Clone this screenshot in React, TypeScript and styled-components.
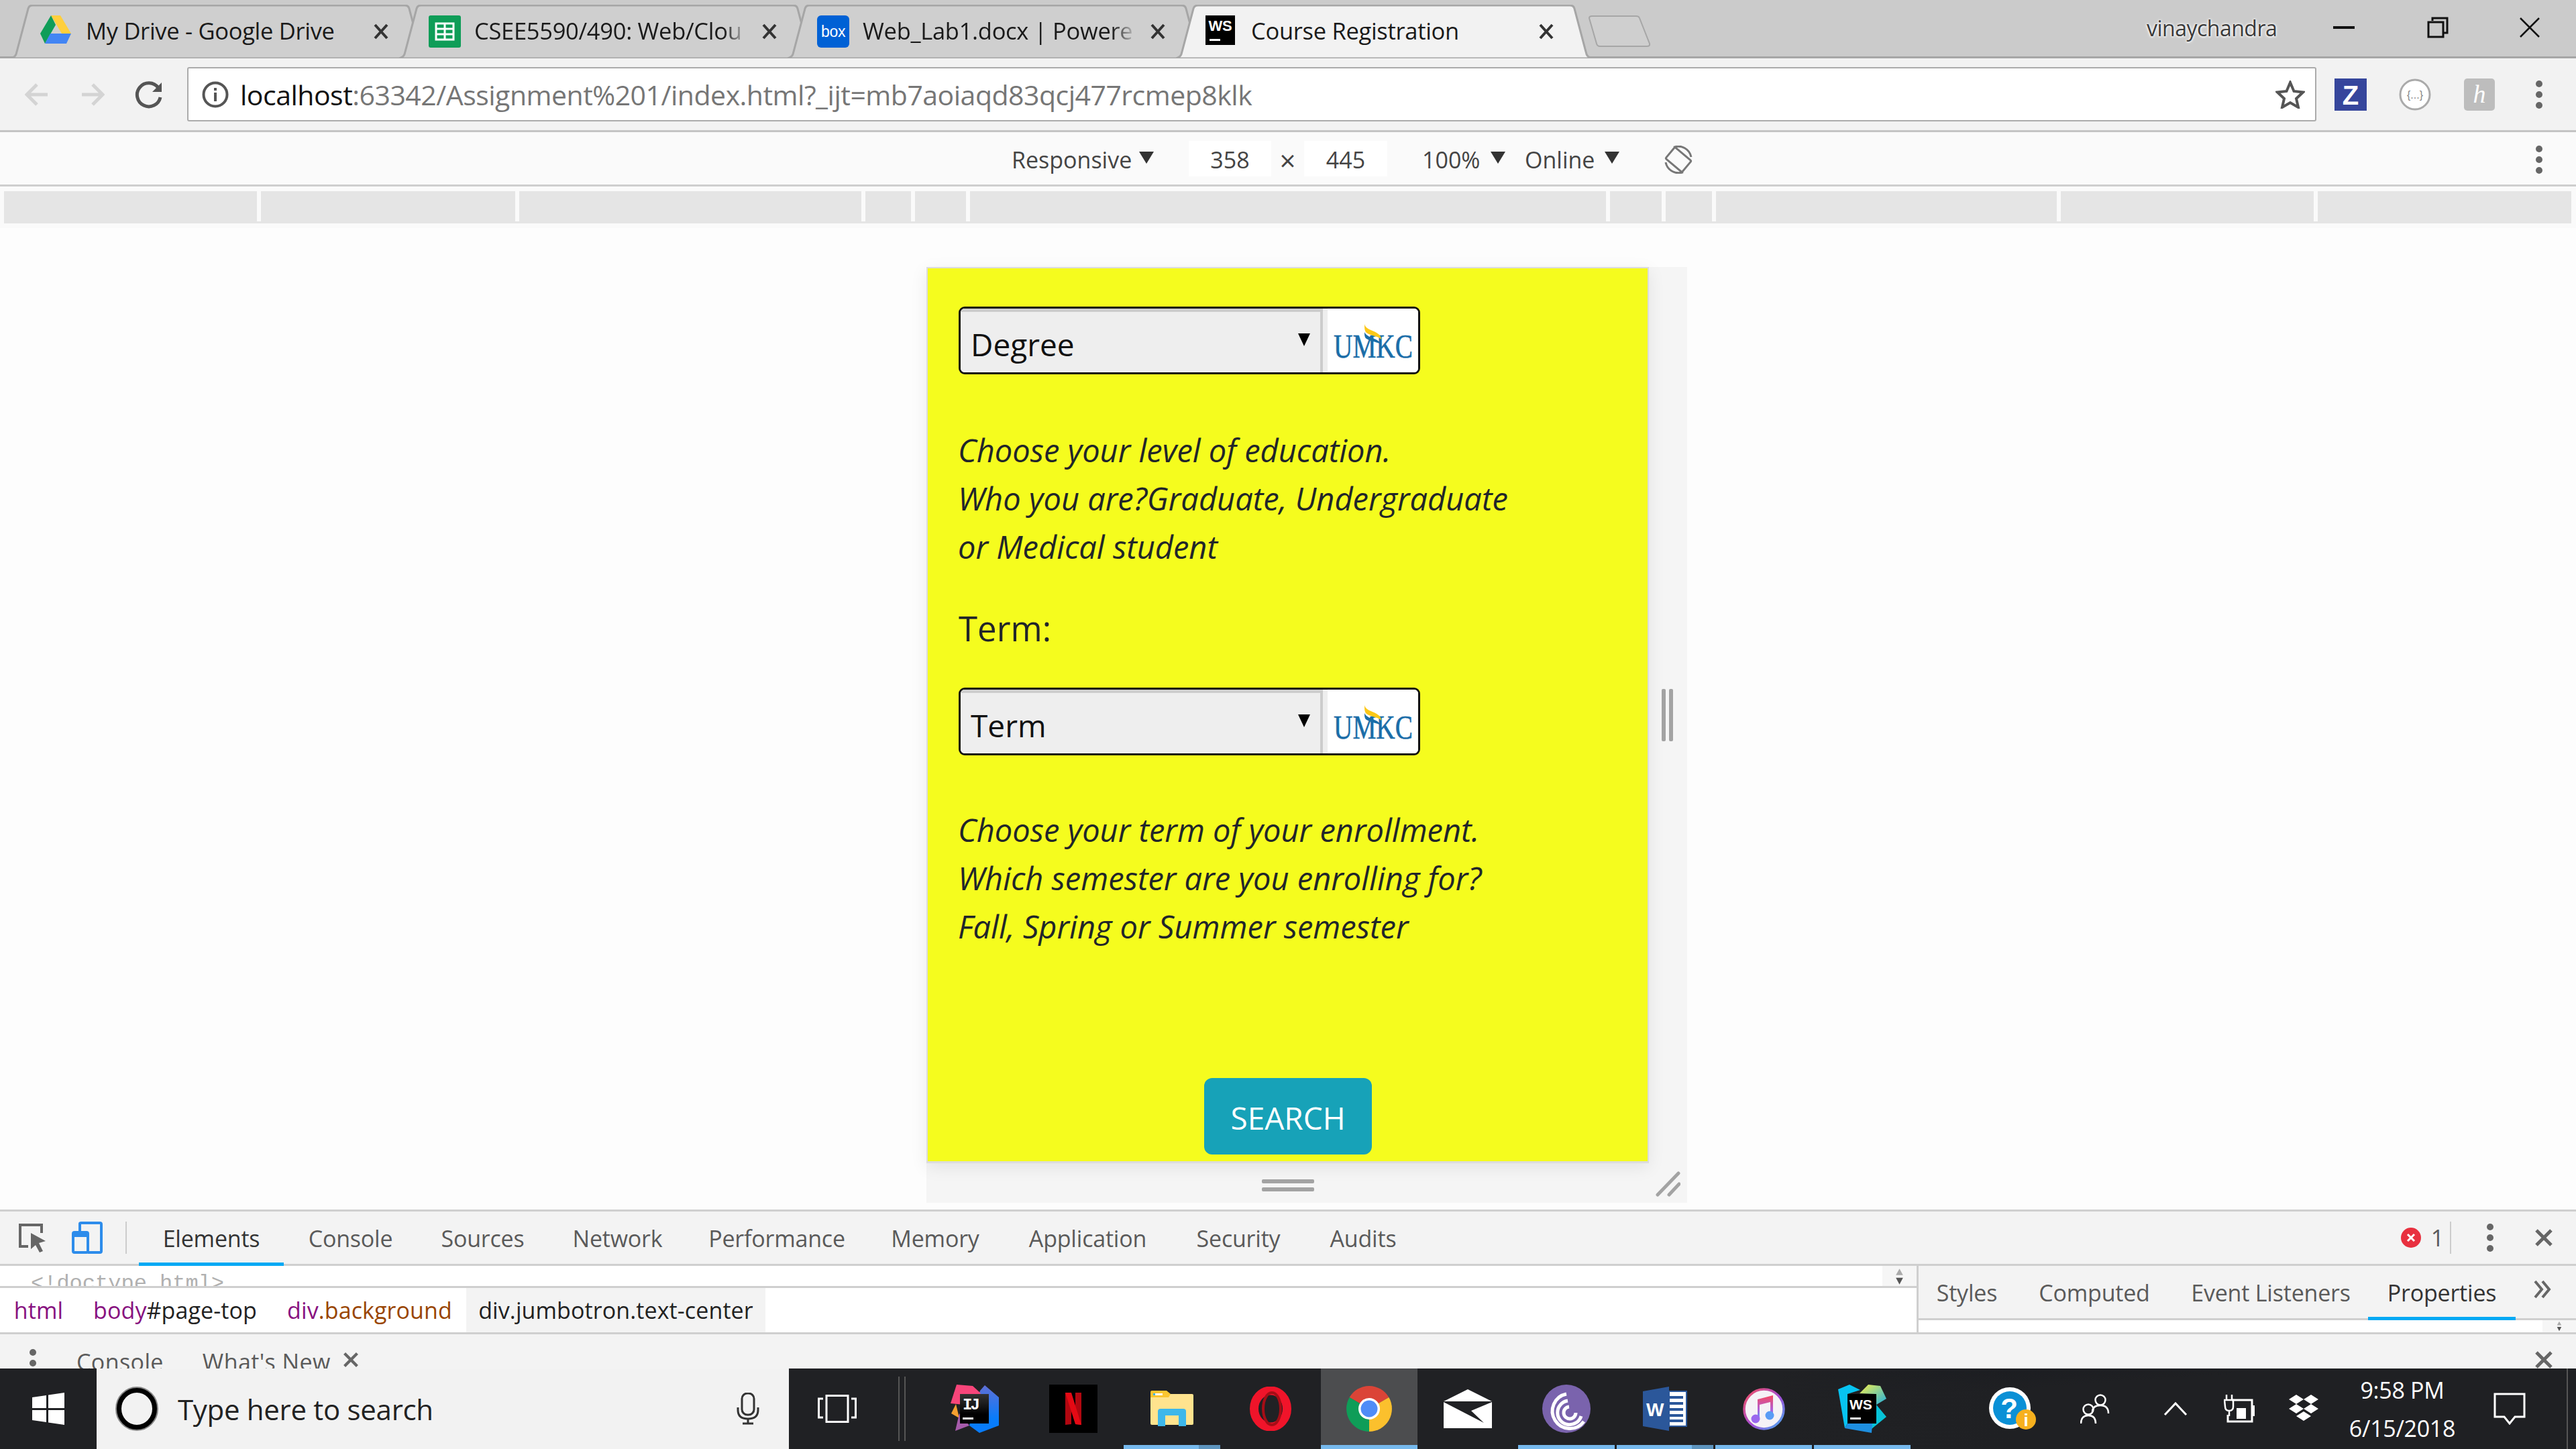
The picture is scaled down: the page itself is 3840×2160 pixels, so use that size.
import React from 'react';
import styled, { createGlobalStyle } from 'styled-components';

const ui = '"Open Sans", "Noto Sans", sans-serif';

const Global = createGlobalStyle`
  html, body { margin: 0; padding: 0; background: #fdfdfd; }
  * { box-sizing: border-box; }
`;

const Screen = styled.div`
  width: 3840px;
  height: 2160px;
  display: flex;
  flex-direction: column;
  overflow: hidden;
  font-family: ${ui};
  color: #333;
`;

/* ---- tab strip ---- */
const TabStrip = styled.div`
  height: 87px;
  flex: none;
  display: flex;
  align-items: flex-start;
  padding: 7px 53px 0 16px;
  background: #cbcbcb;
  border-bottom: 3px solid #a6a6a6;
`;

const TabBox = styled.div<{ $active?: boolean }>`
  position: relative;
  flex: none;
  width: 620px;
  height: 80px;
  margin-right: -41px;
  z-index: ${p => (p.$active ? 2 : 1)};
  display: flex;
  align-items: center;
  font-size: 34.5px;
  letter-spacing: -0.3px;
  color: #1a1a1a;
`;

const TabShape = styled.svg`
  position: absolute;
  inset: 0;
  width: 100%;
  height: 100%;
`;

const Favicon = styled.span`
  position: relative;
  flex: none;
  width: 48px;
  height: 48px;
  margin-left: 44px;
  display: flex;
`;

const TabTitle = styled.span<{ $fade?: boolean }>`
  position: relative;
  top: -2px;
  margin-left: 20px;
  width: 404px;
  white-space: nowrap;
  -webkit-mask-image: ${p => (p.$fade ? 'linear-gradient(to right, #000 92%, transparent 101%)' : 'none')};
  mask-image: ${p => (p.$fade ? 'linear-gradient(to right, #000 92%, transparent 101%)' : 'none')};
`;

const TabClose = styled.svg`
  position: relative;
  flex: none;
  margin-left: 24px;
  width: 24px;
  height: 24px;
`;

const NewTab = styled.svg`
  flex: none;
  width: 94px;
  height: 48px;
  margin: 16px 0 0 35px;
  position: relative;
  z-index: 3;
`;

const UserName = styled.span`
  margin-left: auto;
  margin-top: 13px;
  width: 192px;
  font-size: 32px;
  letter-spacing: -0.5px;
  color: #3a3a3a;
  text-shadow: 0 0 3px #fff, 0 0 5px #fff, 0 1px 3px #eee;
`;

const WinButton = styled.svg<{ $gap: number }>`
  flex: none;
  margin: 18px 0 0 ${p => p.$gap}px;
  width: 32px;
  height: 32px;
`;

/* ---- address toolbar ---- */
const Toolbar = styled.div`
  height: 110px;
  flex: none;
  display: flex;
  align-items: center;
  padding-left: 7px;
  background: #f2f2f2;
  border-bottom: 3px solid #c4c4c4;
`;

const ToolButton = styled.div<{ $w: number }>`
  flex: none;
  width: ${p => p.$w}px;
  height: 60px;
  display: flex;
  align-items: center;
  justify-content: center;
`;

const Omnibox = styled.div`
  flex: none;
  width: 3174px;
  height: 81px;
  margin-left: 8px;
  display: flex;
  align-items: center;
  padding: 0 15px 0 20px;
  background: #fff;
  border: 2px solid #ababab;
  border-radius: 3px;
  font-size: 41px;
  letter-spacing: -0.5px;
`;

const InfoIcon = styled.svg`
  flex: none;
`;

const UrlHost = styled.span`
  margin-left: 17px;
  color: #111;
`;

const UrlRest = styled.span`
  color: #767676;
  flex: 1;
`;

/* ---- device mode bar ---- */
const DeviceBar = styled.div`
  height: 81px;
  flex: none;
  display: flex;
  align-items: center;
  padding-left: 1508px;
  background: #fafafa;
  border-bottom: 3px solid #cecece;
  font-size: 34px;
  color: #444;
`;

const DeviceItem = styled.div<{ $w: number; $ml?: number }>`
  flex: none;
  width: ${p => p.$w}px;
  margin-left: ${p => p.$ml || 0}px;
  padding-top: 3px;
  display: flex;
  align-items: center;
  justify-content: space-between;
  white-space: nowrap;
`;

const SizeInput = styled.div<{ $w: number; $ml?: number }>`
  flex: none;
  width: ${p => p.$w}px;
  margin-left: ${p => p.$ml || 0}px;
  height: 53px;
  padding-top: 3px;
  background: #fff;
  display: flex;
  align-items: center;
  justify-content: center;
`;

const Caret = styled.i`
  display: block;
  width: 0;
  height: 0;
  margin-top: -6px;
  border-left: 11px solid transparent;
  border-right: 11px solid transparent;
  border-top: 18px solid #333;
`;

const Times = styled.span`
  flex: none;
  width: 49px;
  text-align: center;
  font-size: 42px;
  line-height: 42px;
  padding-top: 5px;
`;

const Ruler = styled.div`
  height: 62px;
  flex: none;
  display: flex;
  gap: 6px;
  padding: 7px 6px 0;
  background: linear-gradient(#e5e5e5, #e5e5e5) 6px 52px / 3827px 3px no-repeat, #fafafa;
`;

const RulerCell = styled.div<{ $w: number }>`
  flex: none;
  width: ${p => p.$w}px;
  height: 45px;
  background: #e5e5e5;
`;

/* ---- emulated page ---- */
const Stage = styled.div`
  flex: 1;
  min-height: 0;
  padding: 58px 0 0 1381px;
  background: #fdfdfd;
`;

const Frame = styled.div`
  width: 1134px;
  display: grid;
  grid-template-columns: 1077px 57px;
  grid-template-rows: 1336px 59px;
  background: #f5f5f5;
`;

const Viewport = styled.div`
  background: #f5fc1e;
  border: 2px solid #dcdcdc;
  border-bottom-width: 3px;
  padding: 57px 0 0 46px;
  box-shadow: 0 6px 24px rgba(0, 0, 0, 0.08);
  display: flex;
  flex-direction: column;
  color: #212529;
`;

const SelectGroup = styled.div`
  width: 688px;
  height: 101px;
  flex: none;
  display: flex;
  border: 3px solid #111;
  border-radius: 9px;
  overflow: hidden;
  background: #fff;
`;

const SelectBox = styled.div`
  width: 540px;
  display: flex;
  align-items: center;
  justify-content: space-between;
  padding: 5px 15px 0 15px;
  background: #eee;
  border-top: 5px solid #cdcdcd;
  border-right: 4px solid #ccc;
  font-size: 46px;
  color: #111;
`;

const SelectArrow = styled.i`
  display: block;
  width: 0;
  height: 0;
  margin-top: -12px;
  border-left: 9px solid transparent;
  border-right: 9px solid transparent;
  border-top: 19px solid #000;
`;

const LogoCell = styled.div`
  flex: 1;
  background: #fff;
  border-left: 7px solid #eee;
  display: flex;
  align-items: flex-end;
  justify-content: center;
  padding-bottom: 20px;
`;

const Hint = styled.p<{ $top: number }>`
  margin: ${p => p.$top}px 0 0 -1px;
  font-size: 47px;
  font-style: italic;
  line-height: 72px;
  width: 900px;
`;

const TermLabel = styled.div`
  margin: 49px 0 53px;
  font-size: 51px;
  line-height: 72px;
`;

const SearchButton = styled.button`
  width: 250px;
  height: 114px;
  flex: none;
  margin: 190px 0 0 366px;
  padding: 3px 0 0;
  border: 0;
  border-radius: 12px;
  background: #17a2b8;
  color: #fff;
  font-family: ${ui};
  font-size: 46px;
`;

const SideHandle = styled.div`
  display: flex;
  align-items: center;
  justify-content: center;
  padding-right: 1px;
`;

const BottomHandle = styled.div`
  display: flex;
  align-items: flex-start;
  justify-content: center;
  padding-top: 24px;
`;

const CornerHandle = styled.div`
  padding: 12px 0 0 10px;
`;

/* ---- devtools ---- */
const Devtools = styled.div`
  height: 237px;
  flex: none;
  border-top: 3px solid #cfcfcf;
  background: #f3f3f3;
  font-size: 34px;
  letter-spacing: -0.2px;
  color: #5a5a5a;
  display: flex;
  flex-direction: column;
`;

const DevTabs = styled.div`
  height: 81px;
  flex: none;
  display: flex;
  align-items: stretch;
  border-bottom: 3px solid #cfcfcf;
`;

const DevIconSlot = styled.div<{ $w: number }>`
  flex: none;
  width: ${p => p.$w}px;
  display: flex;
  align-items: center;
  justify-content: center;
`;

const DevTabSep = styled.div<{ $flush?: boolean }>`
  flex: none;
  width: 2px;
  height: 48px;
  margin: ${p => (p.$flush ? '0' : '15px 18px 0 25px')};
  background: #ccc;
`;

const DevTab = styled.div<{ $w: number; $active?: boolean }>`
  flex: none;
  width: ${p => p.$w}px;
  height: 81px;
  padding-top: 3px;
  display: flex;
  align-items: center;
  justify-content: center;
  color: ${p => (p.$active ? '#333' : '#5a5a5a')};
  border-bottom: 5px solid ${p => (p.$active ? '#03a9f4' : 'transparent')};
`;

const DevRight = styled.div`
  margin-left: auto;
  display: flex;
  align-items: center;
  height: 78px;
`;

const ErrorCount = styled.span`
  margin: 0 9px 0 15px;
`;

const SplitRow = styled.div`
  height: 99px;
  flex: none;
  display: flex;
`;

const DomColumn = styled.div`
  flex: none;
  width: 2857px;
  display: flex;
  flex-direction: column;
`;

const DomTree = styled.div`
  height: 33px;
  flex: none;
  display: flex;
  justify-content: space-between;
  background: #fff;
  border-bottom: 3px solid #cfcfcf;
  overflow: hidden;
`;

const DoctypeLine = styled.div`
  padding: 9px 0 0 46px;
  font-family: "Liberation Mono", monospace;
  font-size: 32px;
  letter-spacing: 0;
  line-height: 36px;
  color: #b0b0b0;
  white-space: nowrap;
`;

const Spinner = styled.div`
  width: 51px;
  background: #f6f6f6;
  display: flex;
  justify-content: center;
  padding-top: 3px;
`;

const Crumbs = styled.div`
  flex: 1;
  display: flex;
  align-items: stretch;
  background: #fff;
  letter-spacing: 0.1px;
`;

const Crumb = styled.div<{ $w: number; $selected?: boolean }>`
  flex: none;
  width: ${p => p.$w}px;
  display: flex;
  align-items: center;
  justify-content: center;
  white-space: nowrap;
  color: #222;
  background: ${p => (p.$selected ? '#f3f3f3' : 'transparent')};
`;

const TagName = styled.span`
  color: #881280;
`;

const ClassName = styled.span`
  color: #994500;
`;

const SidePane = styled.div`
  flex: 1;
  border-left: 3px solid #cfcfcf;
  display: flex;
  flex-direction: column;
`;

const SideTabs = styled.div`
  height: 81px;
  flex: none;
  display: flex;
  border-bottom: 3px solid #cfcfcf;
`;

const SideBody = styled.div`
  flex: 1;
  display: flex;
  justify-content: flex-end;
  background: #fff;
  overflow: hidden;
`;

const Chevrons = styled.div`
  flex: 1;
  display: flex;
  align-items: center;
  padding: 0 0 8px 26px;
`;

const SmallSpinner = styled.div`
  width: 50px;
  background: #f6f6f6;
  display: flex;
  justify-content: center;
  padding-top: 1px;
`;

const Drawer = styled.div`
  flex: 1;
  min-height: 0;
  overflow: hidden;
  display: flex;
  align-items: flex-start;
  border-top: 3px solid #cfcfcf;
  padding-top: 18px;
  line-height: 46px;
  letter-spacing: 0.4px;
`;

const DrawerDots = styled.div`
  flex: none;
  width: 10px;
  margin: 3px 0 0 44px;
`;

const DrawerLabel = styled.span<{ $ml: number }>`
  margin-left: ${p => p.$ml}px;
  white-space: nowrap;
`;

const DrawerTabClose = styled.span`
  flex: none;
  margin: 8px 0 0 18px;
  display: flex;
`;

const DrawerClose = styled.span`
  flex: none;
  margin: 6px 34px 0 auto;
  display: flex;
`;

/* ---- windows taskbar ---- */
const Taskbar = styled.div`
  height: 120px;
  flex: none;
  display: flex;
  background:
    linear-gradient(to right, #202124 2650px, rgba(32, 33, 36, 0) 3000px),
    linear-gradient(176deg, #0f1219 0, #12151d 30%, #1f2023 62%);
`;

const StartButton = styled.div`
  width: 144px;
  flex: none;
  display: flex;
  align-items: center;
  padding-left: 48px;
`;

const SearchBox = styled.div`
  width: 1032px;
  flex: none;
  display: flex;
  align-items: center;
  padding: 0 44px 0 28px;
  background: #f2f2f2;
  font-size: 42px;
  letter-spacing: -0.3px;
  color: #222;
`;

const SearchText = styled.span`
  margin-left: 29px;
  flex: 1;
`;

const TaskTile = styled.div<{ $w?: number; $on?: boolean }>`
  position: relative;
  flex: none;
  width: ${p => p.$w || 144}px;
  display: flex;
  align-items: center;
  justify-content: center;
  background: ${p => (p.$on ? '#4c4d4f' : 'transparent')};
`;

const OpenBar = styled.div<{ $split?: boolean }>`
  position: absolute;
  left: 0;
  right: 0;
  bottom: 0;
  height: 6px;
  background: ${p =>
    p.$split ? 'linear-gradient(to right, #76b9ed 78%, #5d94be 78%)' : '#76b9ed'};
`;

const TaskDivider = styled.div`
  width: 61px;
  flex: none;
  display: flex;
  gap: 7px;
  padding: 12px 0 12px 19px;
`;

const DividerLine = styled.i`
  width: 2px;
  background: #555;
`;

const AppList = styled.div`
  display: flex;
  gap: 3px;
`;

const Tray = styled.div`
  margin-left: auto;
  display: flex;
`;

const Clock = styled.div`
  width: 178px;
  flex: none;
  display: flex;
  flex-direction: column;
  align-items: center;
  justify-content: center;
  gap: 7px;
  font-size: 34px;
  line-height: 50px;
  letter-spacing: -0.3px;
  color: #fff;
  white-space: nowrap;
`;

const ShowDesktop = styled.div`
  width: 14px;
  flex: none;
  margin-left: 14px;
  border-left: 2px solid #555;
`;

/* ---- drawings ---- */
const Dots = () => (
  <svg width="10" height="44" viewBox="0 0 10 44">
    <circle cx="5" cy="6" r="5" fill="#666" />
    <circle cx="5" cy="22" r="5" fill="#666" />
    <circle cx="5" cy="38" r="5" fill="#666" />
  </svg>
);

const Cross = ({ size = 28, color = '#666', width = 5 }: { size?: number; color?: string; width?: number }) => (
  <svg width={size} height={size} viewBox="0 0 28 28">
    <path d="M3 3 25 25M25 3 3 25" stroke={color} strokeWidth={width} fill="none" />
  </svg>
);

const Spin = ({ w = 18, h = 44 }: { w?: number; h?: number }) => (
  <svg width={w} height={h} viewBox="0 0 18 44">
    <path d="M9 2 18 18H0Z" fill="#aaa" />
    <path d="M0 25H18L9 42Z" fill="#555" />
  </svg>
);

const DriveIcon = () => (
  <svg width="46" height="42" viewBox="0 0 46 42">
    <path d="M16 0H30L46 27H32Z" fill="#ffcf3d" />
    <path d="M16 0 0 27 7 42 23 14Z" fill="#0f9d58" />
    <path d="M7 42H39L46 27H15Z" fill="#4285f4" />
  </svg>
);

const SheetsIcon = () => (
  <svg width="48" height="48" viewBox="0 0 48 48">
    <rect width="48" height="48" rx="3" fill="#0f9d58" />
    <path d="M11 12H37V36H11ZM11 20H37M11 28H37M24 12V36" fill="none" stroke="#fff" strokeWidth="3" />
  </svg>
);

const BoxIcon = () => (
  <svg width="48" height="48" viewBox="0 0 48 48">
    <rect width="48" height="48" rx="6" fill="#0061d5" />
    <text x="24" y="32" textAnchor="middle" fontFamily="Liberation Sans" fontSize="23" fill="#fff">box</text>
  </svg>
);

const WsIcon = () => (
  <svg width="44" height="44" viewBox="0 0 44 44">
    <rect width="44" height="44" fill="#000" />
    <text x="22" y="23" textAnchor="middle" fontFamily="Liberation Sans" fontWeight="700" fontSize="22" fill="#fff">WS</text>
    <rect x="6" y="35" width="16" height="3" fill="#fff" />
  </svg>
);

const UmkcLogo = () => (
  <svg width="120" height="52" viewBox="0 0 120 52">
    <text x="1" y="50" textLength="118" lengthAdjust="spacingAndGlyphs" fontFamily="Liberation Serif" fontSize="50" fill="#1a6da8" stroke="#1a6da8" strokeWidth="0.6">UMKC</text>
    <path d="M47 12C49 18 58 20 64 23 68 25 70 27 71 30 67 27 56 26 50 22 47 20 47 16 47 12Z" fill="#1a6da8" />
    <path d="M47 0C48 7 58 9 65 13 70 16 72 19 72 23 68 18 57 18 50 13 47 11 47 5 47 0Z" fill="#fcc817" />
  </svg>
);

const Select = ({ label }: { label: string }) => (
  <SelectGroup>
    <SelectBox>
      {label}
      <SelectArrow />
    </SelectBox>
    <LogoCell>
      <UmkcLogo />
    </LogoCell>
  </SelectGroup>
);

const devTabs: Array<[string, number, boolean?]> = [
  ['Elements', 216, true],
  ['Console', 199],
  ['Sources', 195],
  ['Network', 207],
  ['Performance', 268],
  ['Memory', 204],
  ['Application', 251],
  ['Security', 198],
  ['Audits', 174],
];

const sideTabs: Array<[string, number, boolean?]> = [
  ['Styles', 144],
  ['Computed', 236],
  ['Event Listeners', 290],
  ['Properties', 220, true],
];

const rulerCells = [377, 379, 510, 68, 76, 948, 77, 69, 508, 377, 378];

const tabs = [
  { title: 'My Drive - Google Drive', icon: <DriveIcon /> },
  { title: 'CSEE5590/490: Web/Clou', icon: <SheetsIcon />, fade: true },
  { title: 'Web_Lab1.docx | Powerec', icon: <BoxIcon />, fade: true },
  { title: 'Course Registration', icon: <WsIcon />, active: true },
];

const apps = [
  { key: 'ij', open: false, icon: (
    <svg width="72" height="72" viewBox="0 0 72 72">
      <defs>
        <linearGradient id="ijBlue" x1="0" y1="0" x2="0" y2="1">
          <stop offset="0" stopColor="#5f6fd6" />
          <stop offset="0.7" stopColor="#087cfa" />
        </linearGradient>
        <linearGradient id="ijBox" x1="0" y1="0" x2="0" y2="1">
          <stop offset="0" stopColor="#333" />
          <stop offset="0.7" stopColor="#000" />
        </linearGradient>
      </defs>
      <path d="M51 1 72 19V61L43 72 28 61 44 9Z" fill="url(#ijBlue)" />
      <path d="M9 0 33 2 45 13 20 30 0 28Z" fill="#f8457a" />
      <path d="M1 43 8 29 13 50Z" fill="#f5a030" />
      <path d="M7 69 13 43 28 61Z" fill="#a65bab" />
      <rect x="14" y="14" width="43" height="44" fill="url(#ijBox)" />
      <text x="18" y="37" fontFamily="Liberation Mono" fontWeight="700" fontSize="24" letterSpacing="-3" fill="#fff">IJ</text>
      <rect x="18" y="49" width="16" height="3" fill="#fff" />
    </svg>
  ) },
  { key: 'netflix', open: false, icon: (
    <svg width="72" height="72" viewBox="0 0 72 72">
      <rect width="72" height="72" fill="#000" />
      <path d="M24 12H33V59L24 60ZM39 12H48V60L39 59Z" fill="#b20710" />
      <path d="M24 12H33L48 60 39 59Z" fill="#e50914" />
    </svg>
  ) },
  { key: 'files', open: true, split: true, icon: (
    <svg width="64" height="54" viewBox="0 0 64 54">
      <rect y="5" width="64" height="46" rx="2" fill="#ffe38e" />
      <path d="M2 0H24L30 5 27 10H0V2Q0 0 2 0Z" fill="#fbc530" />
      <rect x="4" y="4" width="14" height="3" fill="#fff" />
      <rect x="4" y="4" width="3" height="3" fill="#3db7ea" />
      <path d="M11 53V31Q11 27 15 27H49Q53 27 53 31V53H42V37H22V53Z" fill="#3db7ea" />
    </svg>
  ) },
  { key: 'opera', open: false, icon: (
    <svg width="66" height="66" viewBox="0 0 66 66">
      <ellipse cx="33" cy="33" rx="24.5" ry="27" fill="none" stroke="#f0142a" strokeWidth="13" />
      <ellipse cx="35" cy="33" rx="13" ry="24" fill="none" stroke="#a50d16" strokeWidth="4" />
    </svg>
  ) },
  { key: 'chrome', open: true, on: true, icon: (
    <svg width="68" height="68" viewBox="0 0 68 68">
      <path d="M34 34 4.6 17A34 34 0 0 1 63.4 17Z" fill="#db4437" />
      <path d="M34 34 63.4 17A34 34 0 0 1 34 68Z" fill="#fbc02d" />
      <path d="M34 34 34 68A34 34 0 0 1 4.6 17Z" fill="#0f9d58" />
      <circle cx="34" cy="34" r="16" fill="#fff" />
      <circle cx="34" cy="34" r="12.5" fill="#4f8cf7" />
    </svg>
  ) },
  { key: 'mail', open: false, icon: (
    <svg width="72" height="58" viewBox="0 0 72 58">
      <path d="M36 0 72 18H0Z" fill="#fff" />
      <path d="M0 19H72L41 32 60 50 0 19V58H72V19Z" fill="#fff" fillRule="evenodd" />
    </svg>
  ) },
  { key: 'torrent', open: true, icon: (
    <svg width="72" height="72" viewBox="0 0 72 72">
      <circle cx="36" cy="36" r="36" fill="#7a63ad" />
      <path d="M62 55A26 26 0 1 1 36 14M58 47A18 18 0 1 1 38 24M50 42A9 9 0 1 1 40 33" fill="none" stroke="#fff" strokeWidth="5" />
    </svg>
  ) },
  { key: 'word', open: true, split: true, icon: (
    <svg width="66" height="66" viewBox="0 0 66 66">
      <path d="M0 7 39 0V66L0 59Z" fill="#2b579a" />
      <rect x="39" y="7" width="26" height="52" fill="#fff" stroke="#2b579a" strokeWidth="2" />
      <path d="M39 16H60M39 25H60M39 34H60M39 43H60M39 51H60" stroke="#2b579a" strokeWidth="4" />
      <text x="5" y="44" fontFamily="Liberation Sans" fontWeight="700" fontSize="28" fill="#fff">W</text>
    </svg>
  ) },
  { key: 'itunes', open: true, icon: (
    <svg width="63" height="63" viewBox="0 0 63 63">
      <defs>
        <linearGradient id="itunesRing" x1="0" y1="0" x2="1" y2="1">
          <stop offset="0" stopColor="#f5515f" />
          <stop offset="0.55" stopColor="#a34dd6" />
          <stop offset="1" stopColor="#3fb3f2" />
        </linearGradient>
        <linearGradient id="itunesNote" x1="0" y1="0" x2="0" y2="1">
          <stop offset="0" stopColor="#f5485f" />
          <stop offset="0.6" stopColor="#b05fd8" />
          <stop offset="1" stopColor="#5a9cf5" />
        </linearGradient>
      </defs>
      <circle cx="31.5" cy="31.5" r="29.5" fill="#f5f2f6" stroke="url(#itunesRing)" strokeWidth="3.5" />
      <path d="M22 17 45 11V41L41 44V21L25 25V46H22Z" fill="url(#itunesNote)" />
      <circle cx="19" cy="46" r="6.5" fill="#9a67ee" />
      <circle cx="40" cy="41" r="6.5" fill="#5a9cf5" />
    </svg>
  ) },
  { key: 'webstorm', open: true, icon: (
    <svg width="72" height="72" viewBox="0 0 72 72">
      <defs>
        <linearGradient id="wsYellow" x1="0" y1="0" x2="1" y2="1">
          <stop offset="0" stopColor="#f8f04a" />
          <stop offset="1" stopColor="#20b0e0" />
        </linearGradient>
      </defs>
      <path d="M0 7 17 0 33 8 14 14V58L10 65Z" fill="#07c3f2" />
      <path d="M32 13 45 0 63 2 72 21 57 30 57 14Z" fill="url(#wsYellow)" />
      <path d="M57 30 72 48 50 66 40 58H57Z" fill="#07c3d8" />
      <path d="M10 65 50 72 51 58H14Z" fill="#1e8fe0" />
      <rect x="14" y="14" width="43" height="44" fill="#000" />
      <text x="17" y="37" fontFamily="Liberation Sans" fontWeight="700" fontSize="21" fill="#fff">WS</text>
      <rect x="18" y="49" width="16" height="3" fill="#fff" />
    </svg>
  ) },
];

const App = () => (
  <Screen>
    <Global />
    <TabStrip>
      {tabs.map(tab => (
        <TabBox key={tab.title} $active={tab.active}>
          <TabShape viewBox="0 0 620 80" preserveAspectRatio="none">
            <path
              d="M0 80C6 78 8 76 9 70L26 6Q27 1 33 1H587Q593 1 594 6L611 70C612 76 614 78 620 80Z"
              fill={tab.active ? '#f2f2f2' : '#cfcfcf'}
              stroke="#a6a6a6"
              strokeWidth="3"
            />
          </TabShape>
          <Favicon>{tab.icon}</Favicon>
          <TabTitle $fade={tab.fade}>{tab.title}</TabTitle>
          <TabClose viewBox="0 0 24 24">
            <path d="M3 2 21 22M21 2 3 22" stroke="#333" strokeWidth="4" />
          </TabClose>
        </TabBox>
      ))}
      <NewTab viewBox="0 0 94 48">
        <path d="M2 4Q2 1 6 1H72Q76 1 77 4L92 42Q93 46 88 46H18Q14 46 13 42Z" fill="#cfcfcf" stroke="#a6a6a6" strokeWidth="2" />
      </NewTab>
      <UserName>vinaychandra</UserName>
      <WinButton $gap={86} viewBox="0 0 32 32">
        <rect y="14" width="32" height="4" fill="#111" />
      </WinButton>
      <WinButton $gap={108} viewBox="0 0 32 32">
        <path d="M8 6V2H30V24H25M2 8H24V30H2Z" fill="none" stroke="#111" strokeWidth="3" />
      </WinButton>
      <WinButton $gap={105} viewBox="0 0 32 32">
        <path d="M2 2 30 30M30 2 2 30" stroke="#111" strokeWidth="2.5" />
      </WinButton>
    </TabStrip>

    <Toolbar>
      <ToolButton $w={96}>
        <svg width="36" height="36" viewBox="0 0 36 36">
          <path d="M34 18H4M18 3 3 18 18 33" fill="none" stroke="#d4d4d4" strokeWidth="5" />
        </svg>
      </ToolButton>
      <ToolButton $w={70}>
        <svg width="36" height="36" viewBox="0 0 36 36">
          <path d="M2 18H32M18 3 33 18 18 33" fill="none" stroke="#d4d4d4" strokeWidth="5" />
        </svg>
      </ToolButton>
      <ToolButton $w={98}>
        <svg width="42" height="42" viewBox="0 0 42 42">
          <path d="M35 11A17.5 17.5 0 1 0 38 25" fill="none" stroke="#555" strokeWidth="5" />
          <path d="M40 3V17H26Z" fill="#555" />
        </svg>
      </ToolButton>
      <Omnibox>
        <InfoIcon width="40" height="40" viewBox="0 0 40 40">
          <circle cx="20" cy="20" r="17.5" fill="none" stroke="#555" strokeWidth="4" />
          <path d="M20 17V30M20 10V14" stroke="#555" strokeWidth="4" />
        </InfoIcon>
        <UrlHost>localhost</UrlHost>
        <UrlRest>:63342/Assignment%201/index.html?_ijt=mb7aoiaqd83qcj477rcmep8klk</UrlRest>
        <svg width="44" height="42" viewBox="0 0 44 42">
          <path d="M22 3 27.5 16 41 17.5 31 27 34 40 22 33 10 40 13 27 3 17.5 16.5 16Z" fill="none" stroke="#555" strokeWidth="4" />
        </svg>
      </Omnibox>
      <ToolButton $w={102}>
        <svg width="48" height="48" viewBox="0 0 48 48">
          <rect width="48" height="48" fill="#36469c" />
          <text x="24" y="39" textAnchor="middle" fontFamily="Liberation Sans" fontWeight="700" fontSize="40" fill="#fff">Z</text>
        </svg>
      </ToolButton>
      <ToolButton $w={90}>
        <svg width="48" height="48" viewBox="0 0 48 48">
          <circle cx="24" cy="24" r="22" fill="#fff" stroke="#aaa" strokeWidth="3" />
          <text x="24" y="30" textAnchor="middle" fontFamily="Liberation Sans" fontSize="16" fill="#888">{'{...}'}</text>
        </svg>
      </ToolButton>
      <ToolButton $w={102}>
        <svg width="46" height="48" viewBox="0 0 46 48">
          <rect width="46" height="48" rx="5" fill="#bdbdbd" />
          <text x="23" y="36" textAnchor="middle" fontFamily="Liberation Serif" fontStyle="italic" fontSize="38" fill="#fff">h</text>
        </svg>
      </ToolButton>
      <ToolButton $w={76}>
        <Dots />
      </ToolButton>
    </Toolbar>

    <DeviceBar>
      <DeviceItem $w={212}>Responsive<Caret /></DeviceItem>
      <SizeInput $w={123} $ml={52}>358</SizeInput>
      <Times>×</Times>
      <SizeInput $w={124}>445</SizeInput>
      <DeviceItem $w={124} $ml={52}>100%<Caret /></DeviceItem>
      <DeviceItem $w={141} $ml={29}>Online<Caret /></DeviceItem>
      <DeviceItem $w={42} $ml={67}>
        <svg width="42" height="42" viewBox="0 0 42 42">
          <rect x="5" y="10" width="32" height="22" rx="2" transform="rotate(40 21 21)" fill="none" stroke="#777" strokeWidth="3" />
          <path d="M14 2.5A19.5 19.5 0 0 1 40 17M2 25A19.5 19.5 0 0 0 28 39.5" fill="none" stroke="#777" strokeWidth="3" />
        </svg>
      </DeviceItem>
      <DeviceItem $w={10} $ml={1257}>
        <Dots />
      </DeviceItem>
    </DeviceBar>

    <Ruler>
      {rulerCells.map((w, i) => (
        <RulerCell key={i} $w={w} />
      ))}
    </Ruler>

    <Stage>
      <Frame>
        <Viewport>
          <Select label="Degree" />
          <Hint $top={77}>
            Choose your level of education.
            <br />
            Who you are?Graduate, Undergraduate
            <br />
            or Medical student
          </Hint>
          <TermLabel>Term:</TermLabel>
          <Select label="Term" />
          <Hint $top={75}>
            Choose your term of your enrollment.
            <br />
            Which semester are you enrolling for?
            <br />
            Fall, Spring or Summer semester
          </Hint>
          <SearchButton>SEARCH</SearchButton>
        </Viewport>
        <SideHandle>
          <svg width="18" height="78" viewBox="0 0 18 78">
            <rect x="0" width="6" height="78" rx="2" fill="#a3a3a3" />
            <rect x="11" width="6" height="78" rx="2" fill="#a3a3a3" />
          </svg>
        </SideHandle>
        <BottomHandle>
          <svg width="78" height="18" viewBox="0 0 78 18">
            <rect width="78" height="6" rx="2" fill="#a3a3a3" />
            <rect y="12" width="78" height="6" rx="2" fill="#a3a3a3" />
          </svg>
        </BottomHandle>
        <CornerHandle>
          <svg width="37" height="38" viewBox="0 0 37 38">
            <path d="M3 35 34 3M20 35 35 19" stroke="#a3a3a3" strokeWidth="5" strokeLinecap="round" />
          </svg>
        </CornerHandle>
      </Frame>
    </Stage>

    <Devtools>
      <DevTabs>
        <DevIconSlot $w={98}>
          <svg width="46" height="46" viewBox="0 0 46 46">
            <path d="M16 36H4V4H36V16" fill="none" stroke="#666" strokeWidth="4" />
            <path d="M20 16 42 28 32 31 38 43 33 45 27 34 20 40Z" fill="#666" />
          </svg>
        </DevIconSlot>
        <DevIconSlot $w={64}>
          <svg width="46" height="48" viewBox="0 0 46 48">
            <path d="M12 14V3Q12 2 14 2H42Q44 2 44 4V44Q44 46 42 46H24" fill="none" stroke="#2d8ceb" strokeWidth="4" />
            <rect x="2" y="16" width="22" height="30" rx="2" fill="none" stroke="#2d8ceb" strokeWidth="4" />
            <rect x="2" y="16" width="22" height="7" fill="#2d8ceb" />
          </svg>
        </DevIconSlot>
        <DevTabSep />
        {devTabs.map(([label, w, active]) => (
          <DevTab key={label} $w={w} $active={active}>{label}</DevTab>
        ))}
        <DevRight>
          <svg width="30" height="30" viewBox="0 0 30 30">
            <circle cx="15" cy="15" r="15" fill="#e8303f" />
            <path d="M10 10 20 20M20 10 10 20" stroke="#fff" strokeWidth="3" />
          </svg>
          <ErrorCount>1</ErrorCount>
          <DevTabSep $flush />
          <DevIconSlot $w={116}>
            <Dots />
          </DevIconSlot>
          <DevIconSlot $w={44}>
            <Cross />
          </DevIconSlot>
          <DevIconSlot $w={26} />
        </DevRight>
      </DevTabs>
      <SplitRow>
        <DomColumn>
          <DomTree>
            <DoctypeLine>{'<!doctype html>'}</DoctypeLine>
            <Spinner><Spin w={13} h={26} /></Spinner>
          </DomTree>
          <Crumbs>
            <Crumb $w={115}><TagName>html</TagName></Crumb>
            <Crumb $w={292}><TagName>body</TagName>#page-top</Crumb>
            <Crumb $w={288}><TagName>div</TagName><ClassName>.background</ClassName></Crumb>
            <Crumb $w={446} $selected>div.jumbotron.text-center</Crumb>
          </Crumbs>
        </DomColumn>
        <SidePane>
          <SideTabs>
            {sideTabs.map(([label, w, active]) => (
              <DevTab key={label} $w={w} $active={active}>{label}</DevTab>
            ))}
            <Chevrons>
              <svg width="28" height="30" viewBox="0 0 28 30">
                <path d="M3 3 13 15 3 27M14 3 24 15 14 27" fill="none" stroke="#666" strokeWidth="4" />
              </svg>
            </Chevrons>
          </SideTabs>
          <SideBody>
            <SmallSpinner><Spin w={10} h={16} /></SmallSpinner>
          </SideBody>
        </SidePane>
      </SplitRow>
      <Drawer>
        <DrawerDots>
          <Dots />
        </DrawerDots>
        <DrawerLabel $ml={60}>Console</DrawerLabel>
        <DrawerLabel $ml={58}>What's New</DrawerLabel>
        <DrawerTabClose><Cross size={24} /></DrawerTabClose>
        <DrawerClose><Cross /></DrawerClose>
      </Drawer>
    </Devtools>

    <Taskbar>
      <StartButton>
        <svg width="48" height="48" viewBox="0 0 48 48">
          <path d="M0 7 21 4V23H0ZM24 3.5 48 0V23H24ZM0 26H21V44L0 41ZM24 26H48V48L24 44.5Z" fill="#fff" />
        </svg>
      </StartButton>
      <SearchBox>
        <svg width="64" height="66" viewBox="0 0 64 66">
          <ellipse cx="32" cy="33" rx="27" ry="28" fill="none" stroke="#000" strokeWidth="8" />
          <ellipse cx="32" cy="33" rx="31" ry="32" fill="none" stroke="#888" strokeWidth="2" />
        </svg>
        <SearchText>Type here to search</SearchText>
        <svg width="34" height="48" viewBox="0 0 34 48">
          <rect x="8" y="1" width="18" height="32" rx="8" fill="none" stroke="#333" strokeWidth="3" />
          <path d="M2 22V26Q2 39 17 39 32 39 32 26V22M17 39V46M9 46H25" fill="none" stroke="#333" strokeWidth="3" />
        </svg>
      </SearchBox>
      <TaskTile>
        <svg width="58" height="42" viewBox="0 0 58 42">
          <rect x="13" y="1.5" width="32" height="39" fill="none" stroke="#fff" strokeWidth="3" />
          <path d="M8 6H1.5V34H8M50 6H56.5V34H50" fill="none" stroke="#fff" strokeWidth="3" />
        </svg>
      </TaskTile>
      <TaskDivider>
        <DividerLine />
        <DividerLine />
      </TaskDivider>
      <AppList>
        {apps.map(app => (
          <TaskTile key={app.key} $on={app.on}>
            {app.icon}
            {app.open && <OpenBar $split={app.split} />}
          </TaskTile>
        ))}
      </AppList>
      <Tray>
        <TaskTile $w={120}>
          <svg width="70" height="64" viewBox="0 0 70 64">
            <circle cx="31" cy="31" r="31" fill="#fff" />
            <circle cx="31" cy="31" r="25" fill="#0a90d6" />
            <text x="30" y="46" textAnchor="middle" fontFamily="Liberation Sans" fontWeight="700" fontSize="42" fill="#fff">?</text>
            <circle cx="55" cy="48" r="15" fill="#f6b01e" />
            <text x="55" y="58" textAnchor="middle" fontFamily="Liberation Sans" fontWeight="700" fontSize="26" fill="#fff">i</text>
          </svg>
        </TaskTile>
        <TaskTile $w={126}>
          <svg width="44" height="46" viewBox="0 0 44 46">
            <circle cx="30" cy="10" r="7.5" fill="none" stroke="#fff" strokeWidth="2.5" />
            <path d="M18 28Q18 18 30 18 42 18 42 30" fill="none" stroke="#fff" strokeWidth="2.5" />
            <circle cx="12" cy="24" r="7.5" fill="none" stroke="#fff" strokeWidth="2.5" />
            <path d="M1 45Q1 33 12 33 23 33 23 45" fill="none" stroke="#fff" strokeWidth="2.5" />
          </svg>
        </TaskTile>
        <TaskTile $w={114}>
          <svg width="36" height="22" viewBox="0 0 36 22">
            <path d="M2 20 18 3 34 20" fill="none" stroke="#fff" strokeWidth="3" />
          </svg>
        </TaskTile>
        <TaskTile $w={76}>
          <svg width="46" height="42" viewBox="0 0 46 42">
            <path d="M12 8H42V40H6V30" fill="none" stroke="#fff" strokeWidth="3" />
            <rect x="42" y="16" width="4" height="16" fill="#fff" />
            <rect x="19" y="20" width="14" height="16" fill="#fff" />
            <path d="M4 0V8M12 0V8M1 8H14V18Q14 24 8 24 2 24 2 18ZM8 24V32" fill="none" stroke="#fff" strokeWidth="2.5" />
          </svg>
        </TaskTile>
        <TaskTile $w={116}>
          <svg width="44" height="42" viewBox="0 0 44 42">
            <path d="M11 0 22 7 11 14 0 7ZM33 0 44 7 33 14 22 7ZM11 14 22 21 11 28 0 21ZM33 14 44 21 33 28 22 21ZM22 25 33 32 22 39 11 32Z" fill="#fff" />
          </svg>
        </TaskTile>
        <Clock>
          <span>9:58 PM</span>
          <span>6/15/2018</span>
        </Clock>
        <TaskTile $w={142}>
          <svg width="48" height="48" viewBox="0 0 48 48">
            <path d="M2 2H46V36H32L24 46 16 36H2Z" fill="none" stroke="#fff" strokeWidth="3" />
          </svg>
        </TaskTile>
        <ShowDesktop />
      </Tray>
    </Taskbar>
  </Screen>
);

export default App;
